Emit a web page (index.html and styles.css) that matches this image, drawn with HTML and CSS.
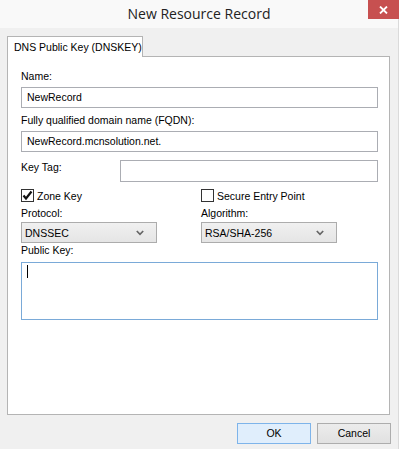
FILE: index.html
```html
<!DOCTYPE html>
<html lang="en">
<head>
    <meta charset="UTF-8">
    <title>New Resource Record</title>
    <link rel="stylesheet" href="styles.css">
</head>
<body>
    <div class="window">
        <div class="titlebar">
            <span></span>
            <div class="title">New Resource Record</div>
            <div class="close">
                <svg width="9" height="8" viewBox="0 0 9 8">
                    <path d="M1 0.5 L8 7.5 M8 0.5 L1 7.5" stroke="#fff" stroke-width="1.8" fill="none"/>
                </svg>
            </div>
        </div>

        <div class="content">
            <div class="tabs">
                <div class="tab">DNS Public Key (DNSKEY)</div>
            </div>

            <div class="panel">
                <div class="lbl">Name:</div>
                <div class="field name-field">NewRecord</div>

                <div class="lbl fqdn-lbl">Fully qualified domain name (FQDN):</div>
                <div class="field fqdn-field">NewRecord.mcnsolution.net.</div>

                <div class="keytag-row">
                    <div class="lbl keytag-lbl">Key Tag:</div>
                    <div class="field keytag-field"></div>
                </div>

                <div class="two-col">
                    <div class="check">
                        <span class="box">
                            <svg width="11" height="11" viewBox="0 0 11 11">
                                <path d="M1.5 5.5 L4 8.5 L9.5 1.5" stroke="#111" stroke-width="2.2" fill="none"/>
                            </svg>
                        </span>
                        Zone Key
                    </div>
                    <div class="check">
                        <span class="box"></span>
                        Secure Entry Point
                    </div>

                    <div class="lbl">Protocol:</div>
                    <div class="lbl">Algorithm:</div>

                    <div class="select">
                        <span>DNSSEC</span>
                        <svg width="8" height="6" viewBox="0 0 8 6">
                            <path d="M0.8 1 L4 4.3 L7.2 1" stroke="#666" stroke-width="1.7" fill="none"/>
                        </svg>
                    </div>
                    <div class="select">
                        <span>RSA/SHA-256</span>
                        <svg width="8" height="6" viewBox="0 0 8 6">
                            <path d="M0.8 1 L4 4.3 L7.2 1" stroke="#666" stroke-width="1.7" fill="none"/>
                        </svg>
                    </div>
                </div>

                <div class="lbl pubkey-lbl">Public Key:</div>
                <div class="textarea"><span class="caret"></span></div>
            </div>

            <div class="buttons">
                <div class="btn btn-default">OK</div>
                <div class="btn">Cancel</div>
            </div>
        </div>
    </div>
</body>
</html>
```

FILE: styles.css
```css
body {
    margin: 0;
    padding: 0;
    font-family: 'Liberation Sans', Arial, sans-serif;
    font-size: 10.5px;
    color: #000;
    background: #f0f0f0;
}

.window {
    width: 399px;
    height: 449px;
    background: #f0f0f0;
    box-sizing: border-box;
    border-right: 1px solid #dadada;
}

/* title bar */
.titlebar {
    height: 28px;
    display: grid;
    grid-template-columns: 1fr auto 1fr;
    background: #f9f9f9;
}

.title {
    font-family: 'Open Sans', 'Noto Sans', sans-serif;
    font-size: 14px;
    line-height: 28px;
    color: #222;
}

.close {
    justify-self: end;
    width: 31px;
    height: 19px;
    margin-right: -1px;
    background: #c75050;
    display: flex;
    align-items: center;
    justify-content: center;
}

/* tab control */
.content {
    padding: 8px 8px 0 7px;
}

.tabs {
    display: flex;
    position: relative;
    z-index: 1;
    margin-bottom: -1px;
}

.tab {
    width: 136px;
    height: 21px;
    line-height: 20px;
    padding-left: 6px;
    box-sizing: border-box;
    white-space: nowrap;
    background: #fff;
    border: 1px solid #b4b4b4;
    border-bottom: none;
}

.panel {
    width: 383px;
    height: 359px;
    box-sizing: border-box;
    background: #fff;
    border: 1px solid #b4b4b4;
    padding: 13px 11px 0 13px;
}

.lbl {
    line-height: 13px;
    height: 13px;
    white-space: nowrap;
}

.field {
    height: 21px;
    line-height: 19px;
    box-sizing: border-box;
    border: 1px solid #abadb3;
    padding-left: 5px;
    background: #fff;
}

.name-field {
    margin-top: 4px;
}

.fqdn-lbl {
    margin-top: 6px;
}

.fqdn-field {
    margin-top: 4px;
}

.keytag-row {
    display: flex;
    align-items: flex-start;
    margin-top: 8px;
}

.keytag-lbl {
    width: 99px;
    margin-top: 1px;
}

.keytag-field {
    flex: 1;
    height: 22px;
}

.two-col {
    display: grid;
    grid-template-columns: 180px 1fr;
    margin-top: 7px;
}

.check {
    display: flex;
    align-items: center;
    gap: 3px;
    height: 13px;
}

.box {
    width: 13px;
    height: 13px;
    box-sizing: border-box;
    border: 1px solid #333;
    background: #fff;
    display: flex;
    align-items: center;
    justify-content: center;
}

.two-col .lbl {
    margin-top: 5px;
}

.select {
    width: 136px;
    height: 21px;
    margin-top: 2px;
    box-sizing: border-box;
    border: 1px solid #acacac;
    background: linear-gradient(#f0f0f0, #e5e5e5);
    display: flex;
    align-items: center;
    justify-content: space-between;
    padding: 0 12px 0 3px;
}

.pubkey-lbl {
    margin-top: 1px;
}

.textarea {
    margin-top: 5px;
    height: 58px;
    box-sizing: border-box;
    border: 1px solid #7aaad8;
    padding: 2px 0 0 5px;
}

.caret {
    display: block;
    width: 1px;
    height: 13px;
    background: #000;
}

/* dialog buttons */
.buttons {
    display: flex;
    justify-content: flex-end;
    gap: 6px;
    margin-top: 8px;
    margin-right: -1px;
}

.btn {
    width: 74px;
    height: 21px;
    line-height: 19px;
    box-sizing: border-box;
    text-align: center;
    border: 1px solid #adadad;
    background: linear-gradient(#ececec, #e1e1e1);
}

.btn-default {
    border-color: #7eb4ea;
    background: #e0eefc;
}
```
